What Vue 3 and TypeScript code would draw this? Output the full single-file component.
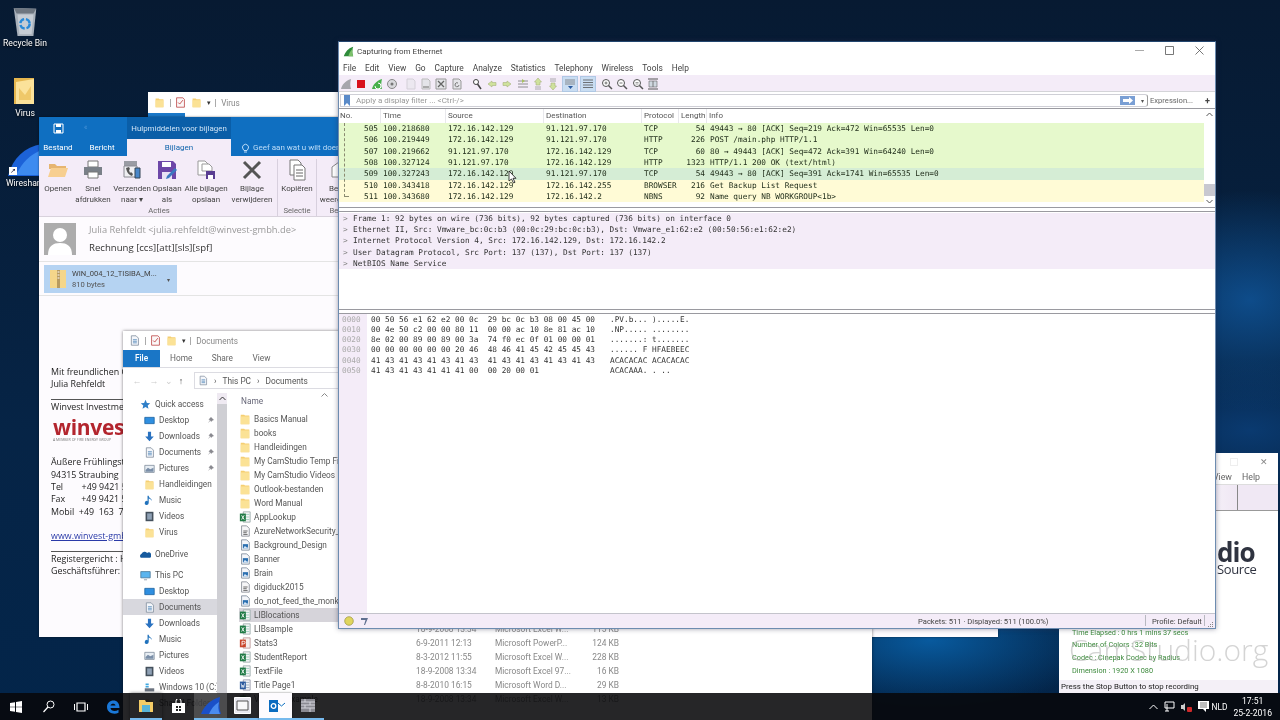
<script setup lang="ts">
interface Packet {
  no: number
  time: string
  src: string
  dst: string
  proto: string
  len: number
  info: string
  tone: string
}

const wsMenu = ['File', 'Edit', 'View', 'Go', 'Capture', 'Analyze', 'Statistics', 'Telephony', 'Wireless', 'Tools', 'Help']

const packets: Packet[] = [
  { no: 505, time: '100.218680', src: '172.16.142.129', dst: '91.121.97.170', proto: 'TCP', len: 54, info: '49443 → 80 [ACK] Seq=219 Ack=472 Win=65535 Len=0', tone: 'green' },
  { no: 506, time: '100.219449', src: '172.16.142.129', dst: '91.121.97.170', proto: 'HTTP', len: 226, info: 'POST /main.php HTTP/1.1', tone: 'green' },
  { no: 507, time: '100.219662', src: '91.121.97.170', dst: '172.16.142.129', proto: 'TCP', len: 60, info: '80 → 49443 [ACK] Seq=472 Ack=391 Win=64240 Len=0', tone: 'green' },
  { no: 508, time: '100.327124', src: '91.121.97.170', dst: '172.16.142.129', proto: 'HTTP', len: 1323, info: 'HTTP/1.1 200 OK  (text/html)', tone: 'green' },
  { no: 509, time: '100.327243', src: '172.16.142.129', dst: '91.121.97.170', proto: 'TCP', len: 54, info: '49443 → 80 [ACK] Seq=391 Ack=1741 Win=65535 Len=0', tone: 'hover' },
  { no: 510, time: '100.343418', src: '172.16.142.129', dst: '172.16.142.255', proto: 'BROWSER', len: 216, info: 'Get Backup List Request', tone: 'yellow' },
  { no: 511, time: '100.343680', src: '172.16.142.129', dst: '172.16.142.2', proto: 'NBNS', len: 92, info: 'Name query NB WORKGROUP<1b>', tone: 'yellow' },
]

const details = [
  'Frame 1: 92 bytes on wire (736 bits), 92 bytes captured (736 bits) on interface 0',
  'Ethernet II, Src: Vmware_bc:0c:b3 (00:0c:29:bc:0c:b3), Dst: Vmware_e1:62:e2 (00:50:56:e1:62:e2)',
  'Internet Protocol Version 4, Src: 172.16.142.129, Dst: 172.16.142.2',
  'User Datagram Protocol, Src Port: 137 (137), Dst Port: 137 (137)',
  'NetBIOS Name Service',
]

const hexRows = [
  ['0000', '00 50 56 e1 62 e2 00 0c  29 bc 0c b3 08 00 45 00', '.PV.b... ).....E.'],
  ['0010', '00 4e 50 c2 00 00 80 11  00 00 ac 10 8e 81 ac 10', '.NP..... ........'],
  ['0020', '8e 02 00 89 00 89 00 3a  74 f0 ec 0f 01 00 00 01', '.......: t.......'],
  ['0030', '00 00 00 00 00 00 20 46  48 46 41 45 42 45 45 43', '...... F HFAEBEEC'],
  ['0040', '41 43 41 43 41 43 41 43  41 43 41 43 41 43 41 43', 'ACACACAC ACACACAC'],
  ['0050', '41 43 41 43 41 41 41 00  00 20 00 01', 'ACACAAA. . ..'],
]

const ribbon = [
  { label: ['Openen'], icon: 'open', w: 30 },
  { label: ['Snel', 'afdrukken'], icon: 'print', w: 40 },
  { label: ['Verzenden', 'naar ▾'], icon: 'send', w: 38 },
  { label: ['Opslaan', 'als'], icon: 'save', w: 32 },
  { label: ['Alle bijlagen', 'opslaan'], icon: 'saveall', w: 46 },
  { label: ['Bijlage', 'verwijderen'], icon: 'del', w: 46 },
]

const nav = [
  { label: 'Quick access', icon: 'star', lvl: 0 },
  { label: 'Desktop', icon: 'desk', lvl: 1, pin: true },
  { label: 'Downloads', icon: 'down', lvl: 1, pin: true },
  { label: 'Documents', icon: 'doc', lvl: 1, pin: true },
  { label: 'Pictures', icon: 'pic', lvl: 1, pin: true },
  { label: 'Handleidingen', icon: 'folder', lvl: 1 },
  { label: 'Music', icon: 'music', lvl: 1 },
  { label: 'Videos', icon: 'video', lvl: 1 },
  { label: 'Virus', icon: 'folder', lvl: 1 },
  { label: 'OneDrive', icon: 'cloud', lvl: 0, gap: 6 },
  { label: 'This PC', icon: 'pc', lvl: 0, gap: 5 },
  { label: 'Desktop', icon: 'desk', lvl: 1 },
  { label: 'Documents', icon: 'doc', lvl: 1, sel: true },
  { label: 'Downloads', icon: 'down', lvl: 1 },
  { label: 'Music', icon: 'music', lvl: 1 },
  { label: 'Pictures', icon: 'pic', lvl: 1 },
  { label: 'Videos', icon: 'video', lvl: 1 },
  { label: 'Windows 10 (C:)', icon: 'drive', lvl: 1 },
  { label: 'Shared Folder', icon: 'folder', lvl: 1 },
]

const files = [
  { name: 'Basics Manual', icon: 'folder' },
  { name: 'books', icon: 'folder' },
  { name: 'Handleidingen', icon: 'folder' },
  { name: 'My CamStudio Temp Files', icon: 'folder' },
  { name: 'My CamStudio Videos', icon: 'folder' },
  { name: 'Outlook-bestanden', icon: 'folder' },
  { name: 'Word Manual', icon: 'folder' },
  { name: 'AppLookup', icon: 'xls' },
  { name: 'AzureNetworkSecurity_', icon: 'txt' },
  { name: 'Background_Design', icon: 'img' },
  { name: 'Banner', icon: 'img' },
  { name: 'Brain', icon: 'img' },
  { name: 'digiduck2015', icon: 'txt' },
  { name: 'do_not_feed_the_monkeys', icon: 'img' },
  { name: 'LIBlocations', icon: 'xls', sel: true },
  { name: 'LIBsample', icon: 'xls', date: '18-9-2008 13:34', type: 'Microsoft Excel W...', size: '115 KB' },
  { name: 'Stats3', icon: 'ppt', date: '6-9-2011 12:13', type: 'Microsoft PowerP...', size: '124 KB' },
  { name: 'StudentReport', icon: 'xls', date: '8-3-2012 11:55', type: 'Microsoft Excel W...', size: '228 KB' },
  { name: 'TextFile', icon: 'xls', date: '18-9-2008 13:34', type: 'Microsoft Excel 97...', size: '16 KB' },
  { name: 'Title Page1', icon: 'word', date: '8-8-2010 16:15', type: 'Microsoft Word D...', size: '29 KB' },
  { name: 'VLookupExample', icon: 'xls', date: '18-9-2008 13:34', type: 'Microsoft Excel W...', size: '13 KB' },
]

const address = [
  'Äußere Frühlingstraße 12',
  '94315 Straubing',
  'Tel        +49 9421 5',
  'Fax       +49 9421 5',
  'Mobil  +49  163  7',
]

const taskApps = ['explorer', 'store', 'shark', 'cam', 'outlook', 'brick']
const appOn = (a: string) => a !== 'store'
</script>

<template>
  <div class="desktop">
    <svg width="0" height="0" class="defs">
      <defs>
        <symbol id="i-folder" viewBox="0 0 14 14"><path d="M2 2h4l1 1h5v10H2z" fill="#f5cf72" /><path d="M2 4h10v9H2z" fill="#fbe296" /></symbol>
        <symbol id="i-doc" viewBox="0 0 14 14"><path d="M3 1h6l3 3v9H3z" fill="#f4f6fa" stroke="#7f8c9c" /><path d="M5 6h5M5 8h5M5 10h5" stroke="#4f86b8" /></symbol>
        <symbol id="i-txt" viewBox="0 0 14 14"><path d="M3 1h6l3 3v9H3z" fill="#f6f6f8" stroke="#8a8f98" /><path d="M5 7h5M5 9h4M5 11h5" stroke="#555" /></symbol>
        <symbol id="i-check" viewBox="0 0 14 14"><path d="M2 1h8l2 2v10H2z" fill="#fbf8f8" stroke="#b44" /><path d="M4 7l2 2 4-5" stroke="#b33" fill="none" /></symbol>
        <symbol id="i-xls" viewBox="0 0 14 14"><path d="M5 1h8v12H5z" fill="#f5f6f6" stroke="#9aa" /><path d="M8 4h4M8 7h4M8 10h4" stroke="#9cb" /><path d="M1 3h7v9H1z" fill="#1f7a45" /><path d="M3 5l3 5M6 5l-3 5" stroke="#fff" /></symbol>
        <symbol id="i-ppt" viewBox="0 0 14 14"><path d="M5 1h8v12H5z" fill="#f5f0ee" stroke="#b99" /><path d="M1 3h7v9H1z" fill="#c8452a" /><path d="M3.5 10V5h2a1.3 1.3 0 0 1 0 3h-2" stroke="#fff" fill="none" /></symbol>
        <symbol id="i-word" viewBox="0 0 14 14"><path d="M5 1h8v12H5z" fill="#f2f4f8" stroke="#99a" /><path d="M8 4h4M8 7h4M8 10h4" stroke="#9ab" /><path d="M1 3h7v9H1z" fill="#2b5a9e" /><path d="M2.5 5l1 5 1-3 1 3 1-5" stroke="#fff" fill="none" stroke-width=".8" /></symbol>
        <symbol id="i-img" viewBox="0 0 14 14"><path d="M3 1h6l3 3v9H3z" fill="#f4f6fa" stroke="#7f8c9c" /><path d="M4.500 6h6v5h-6z" fill="#2a6fb0" /><path d="M5 11l2-3 1.500 2 1-1 1 2z" fill="#d8e8f8" /></symbol>
        <symbol id="i-desk" viewBox="0 0 14 14"><path d="M1 3h12v8H1z" fill="#2f8fe0" stroke="#17609f" /></symbol>
        <symbol id="i-down" viewBox="0 0 14 14"><path d="M5 1h4v6h3.500L7 13 1.500 7H5z" fill="#2a72c0" /></symbol>
        <symbol id="i-pic" viewBox="0 0 14 14"><path d="M1 3h12v9H1z" fill="#e8eef4" stroke="#7f8c9c" /><path d="M2 9l3-3 3 2 4-2v5H2z" fill="#7a8ea8" /></symbol>
        <symbol id="i-music" viewBox="0 0 14 14"><path d="M6 1v9a2.500 2.500 0 1 1-1.500-2.200V1h1.500c0 3 4 3 4 6.500-1-2-2.500-2.500-4-3" fill="#2072bc" /></symbol>
        <symbol id="i-video" viewBox="0 0 14 14"><path d="M2 1h10v12H2z" fill="#44505c" /><path d="M4 3h6v8H4z" fill="#8ea0b4" /></symbol>
        <symbol id="i-star" viewBox="0 0 14 14"><path d="M7 1l1.800 4 4.200.4-3.200 2.800 1 4.300L7 10.200 3.200 12.500l1-4.300L1 5.400 5.200 5z" fill="#2f7fc8" /></symbol>
        <symbol id="i-cloud" viewBox="0 0 14 14"><path d="M1 11a3 3 0 0 1 1-5 4 4 0 0 1 7-1 3 3 0 0 1 4 6z" fill="#165a9e" /></symbol>
        <symbol id="i-pc" viewBox="0 0 14 14"><path d="M1 2h12v8H1z" fill="#5ab4ee" stroke="#4a7898" /><path d="M5 12h4v1H5z" fill="#7a8a9a" /></symbol>
        <symbol id="i-drive" viewBox="0 0 14 14"><path d="M1 8h12v4H1z" fill="#6c7480" /><path d="M2 2h4v2H2zM2 5h4v2H2z" fill="#40a8e0" /></symbol>
        <symbol id="i-shark" viewBox="0 0 14 14"><path d="M1 13C3 8 6 3 13 1c-1.500 4-1.500 8 0 12z" fill="#2e8b3a" /><path d="M7 13c.5-3 2-6 5.500-10-1 4-1 7 .5 10z" fill="#7cc06a" /></symbol>
      </defs>
    </svg>

    <!-- desktop icons -->
    <div class="desk-icon recycle">
      <svg width="30" height="30" viewBox="0 0 30 32"><path d="M3 2l24 1-3 29H7z" fill="#a8b0ba" /><path d="M3 2l24 1-3 5H6z" fill="#6e7680" /><path d="M7 9h17l-2 21H9z" fill="#c6ccd4" /><circle cx="15" cy="19" r="5" fill="none" stroke="#2a8ad8" stroke-width="2.500" stroke-dasharray="6 2" /></svg>
      <span>Recycle Bin</span>
    </div>
    <div class="desk-icon virus">
      <svg width="24" height="30" viewBox="0 0 24 30"><path d="M1 2h20v26H1z" fill="#e5b64e" /><path d="M3 6l18-3v25H3z" fill="#fbe29a" /><path d="M6 12l6 7 6-9v14H6z" fill="#efc869" /></svg>
      <span>Virus</span>
    </div>
    <div class="desk-icon shark-ic">
      <svg width="34" height="32" viewBox="0 0 34 32"><path d="M0 32C5 14 16 3 34 0v32z" fill="#1c62d8" /><path d="M8 31C14 19 22 10 34 6v25z" fill="#3d8bf0" /></svg>
      <i class="shortcut">↗</i>
      <span>Wireshark</span>
    </div>

    <!-- CamStudio behind everything -->
    <section class="win cam">
      <div class="cam-title"><i class="cam-max"></i><span class="cam-x">✕</span></div>
      <div class="cam-menu"><span>Region</span><span>Effects</span><span>View</span><span>Help</span></div>
      <div class="cam-tools"><div class="cam-sep"></div></div>
      <div class="cam-body">
        <div class="cam-logo"><b>dio</b><span>Source</span></div>
        <div class="cam-stats">
          <p>Time Elapsed : 0 hrs 1 mins 37 secs</p>
          <p>Number of Colors : 32 Bits</p>
          <p>Codec : Cinepak Codec by Radius</p>
          <p>Dimension : 1920 X 1080</p>
        </div>
        <div class="cam-mark">CamStudio.org</div>
      </div>
      <div class="cam-status">Press the Stop Button to stop recording</div>
    </section>

    <!-- Virus folder -->
    <section class="win virusfolder">
      <div class="qat">
        <svg width="11" height="11"><use href="#i-folder" /></svg>
        <i class="qsep"></i>
        <svg width="11" height="11"><use href="#i-check" /></svg>
        <svg width="11" height="11"><use href="#i-folder" /></svg>
        <small>▾</small>
        <i class="qsep"></i>
        <span>Virus</span>
      </div>
      <div class="vf-tab"></div>
    </section>

    <!-- Outlook attachment window -->
    <section class="win outlook">
      <div class="ol-top">
        <div class="ol-save">
          <svg width="11" height="11" viewBox="0 0 11 11"><path d="M1 1h9v9H1z" fill="none" stroke="#fff" /><path d="M3 1h5v3H3zM3 7h5v3H3z" fill="#fff" /></svg>
          <em>«</em>
        </div>
        <div class="ol-ctx">Hulpmiddelen voor bijlagen</div>
      </div>
      <div class="ol-tabs">
        <span class="ol-tab first">Bestand</span>
        <span class="ol-tab second">Bericht</span>
        <span class="ol-tab cur">Bijlagen</span>
        <span class="ol-tell">
          <svg width="9" height="10" viewBox="0 0 9 10"><path d="M2 6a3 3 0 1 1 5 0L6 7.500H3zM3 9h3" fill="none" stroke="#bcdcf8" /></svg>
          Geef aan wat u wilt doen
        </span>
      </div>
      <div class="ol-ribbon">
        <div class="rb-group">
          <div class="rb-btns">
            <div v-for="b in ribbon" :key="b.icon" class="rb-btn" :style="{ width: b.w + 'px' }">
              <svg width="22" height="22" viewBox="0 0 22 22">
                <template v-if="b.icon === 'open'"><path d="M2 5h6l2 2h9v3H2z" fill="#e6b570" /><path d="M1 18l3-9h17l-3 9z" fill="#f7cf90" /></template>
                <template v-else-if="b.icon === 'print'"><path d="M6 2h10v6H6z" fill="#fff" stroke="#777" /><path d="M2 8h18v8H2z" fill="#7a8088" /><path d="M6 13h10v6H6z" fill="#fff" stroke="#777" /></template>
                <template v-else-if="b.icon === 'send'"><path d="M3 2h13v5H3z" fill="#9a9ca4" /><path d="M3 7h13v11H3z" fill="#efeff2" stroke="#8a8a92" /><path d="M5 9c1 5 3 7 6 8l1-2-2-2-1 1-1-3 1-1-1-2z" fill="#555" /><path d="M14 9h5v10h-5z" fill="#4a86c8" stroke="#345" /></template>
                <template v-else-if="b.icon === 'save'"><path d="M2 2h15l3 3v15H2z" fill="#6d47a8" /><path d="M6 3h9v5H6z" fill="#fff" /><path d="M6 13h10v7H6z" fill="#e8e2f4" /><path d="M11 17l8-8 2 2-8 8-3 1z" fill="#3a78c0" /></template>
                <template v-else-if="b.icon === 'saveall'"><path d="M3 2h7l3 3v11H3z" fill="#fff" stroke="#999" /><path d="M7 5h7l3 3v4H7z" fill="#fff" stroke="#999" /><path d="M11 12h9v8h-9z" fill="#5a3e92" /><path d="M13 16h5v4h-5z" fill="#fff" /></template>
                <template v-else><path d="M3 3l16 16M19 3L3 19" stroke="#555" stroke-width="3" /></template>
              </svg>
              <span v-for="l in b.label" :key="l">{{ l }}</span>
            </div>
          </div>
          <div class="rb-name">Acties</div>
        </div>
        <div class="rb-group sep">
          <div class="rb-btns">
            <div class="rb-btn copy">
              <svg width="22" height="22" viewBox="0 0 22 22"><path d="M4 1h8l3 3v12H4z" fill="#fff" stroke="#777" /><path d="M8 6h8l3 3v12H8z" fill="#fff" stroke="#777" /><path d="M10 11h7M10 14h7M10 17h7" stroke="#666" /></svg>
              <span>Kopiëren</span>
            </div>
          </div>
          <div class="rb-name">Selectie</div>
        </div>
        <div class="rb-group sep">
          <div class="rb-btns">
            <div class="rb-btn view">
              <svg width="22" height="22" viewBox="0 0 22 22"><path d="M4 8l7-5 7 5v10H4z" fill="#fff" stroke="#888" /></svg>
              <span>Beeld</span><span>weergeven</span>
            </div>
          </div>
          <div class="rb-name">Beeld</div>
        </div>
      </div>
      <div class="ol-head">
        <svg width="32" height="32" viewBox="0 0 32 32"><path d="M0 0h32v32H0z" fill="#acacac" /><circle cx="16" cy="12" r="7" fill="#fff" /><path d="M4 32c0-9 5-12 12-12s12 3 12 12z" fill="#fff" /></svg>
        <div>
          <div class="ol-from">Julia Rehfeldt &lt;julia.rehfeldt@winvest-gmbh.de&gt;</div>
          <div class="ol-subj">Rechnung [ccs][att][sls][spf]</div>
        </div>
      </div>
      <div class="ol-attach">
        <div class="chip">
          <svg width="16" height="20" viewBox="0 0 16 20"><path d="M0 1h16v18H0z" fill="#f4d68a" /><path d="M7 1h3v18H7z" fill="#b89b60" /><path d="M7.500 3h2M7.500 6h2M7.500 9h2" stroke="#fff" /></svg>
          <div class="chip-txt"><span>WIN_004_12_TISIBA_M...</span><span class="chip-size">810 bytes</span></div>
          <small>▾</small>
        </div>
      </div>
      <div class="ol-body">
        <p>Mit freundlichen Grüßen</p>
        <p>Julia Rehfeldt</p>
        <div class="sig-rule"></div>
        <p>Winvest Investment GmbH</p>
        <div class="logo">winvest<small>A MEMBER OF FIRE ENERGY GROUP</small></div>
        <div class="sig-addr"><p v-for="a in address" :key="a" class="pre">{{ a }}</p></div>
        <a class="sig-link">www.winvest-gmbh.de</a>
        <div class="sig-rule"></div>
        <p>Registergericht : HRB</p>
        <p>Geschäftsführer: C</p>
      </div>
    </section>

    <!-- Explorer -->
    <section class="win explorer">
      <div class="qat ex-qat">
        <svg width="11" height="11"><use href="#i-doc" /></svg>
        <i class="qsep"></i>
        <svg width="11" height="11"><use href="#i-check" /></svg>
        <svg width="11" height="11"><use href="#i-folder" /></svg>
        <small>▾</small>
        <i class="qsep"></i>
        <span>Documents</span>
      </div>
      <div class="ex-tabs">
        <span class="ex-file">File</span><span>Home</span><span>Share</span><span>View</span>
      </div>
      <div class="ex-addr">
        <span class="ex-arrow dim">←</span><span class="ex-arrow dim">→</span><span class="ex-arrow dim small">⌄</span><span class="ex-arrow">↑</span>
        <div class="crumbs">
          <svg width="10" height="11"><use href="#i-doc" /></svg>
          <span>›</span><span>This PC</span><span>›</span><span>Documents</span>
        </div>
      </div>
      <div class="ex-main">
        <nav class="ex-nav">
          <div v-for="(n, i) in nav" :key="i" class="nav-row" :class="['lvl' + n.lvl, { sel: n.sel }]" :style="n.gap ? { marginTop: n.gap + 'px' } : undefined">
            <svg width="11" height="11"><use :href="'#i-' + n.icon" /></svg>
            <span>{{ n.label }}</span>
            <svg v-if="n.pin" class="pin" width="7" height="7" viewBox="0 0 7 7"><path d="M4 0l3 3-1.500.5L4 5 3.500 3.500 1 6l2-3-1.500-.5z" fill="#8a8a90" /></svg>
          </div>
        </nav>
        <div class="ex-scroll">
          <svg class="chev" width="7" height="5" viewBox="0 0 7 5"><path d="M.5 4l3-3 3 3" fill="none" stroke="#333" /></svg>
          <div class="ex-thumb"></div>
        </div>
        <div class="ex-files">
          <div class="ex-head"><span>Name</span><svg class="sort" width="7" height="4" viewBox="0 0 7 4"><path d="M.5 3.500l3-3 3 3" fill="none" stroke="#888" /></svg></div>
          <div v-for="f in files" :key="f.name" class="file-row" :class="{ sel: f.sel }">
            <span class="file-name"><svg width="12" height="12"><use :href="'#i-' + f.icon" /></svg>{{ f.name }}</span>
            <span class="meta">{{ f.date }}</span>
            <span class="meta">{{ f.type }}</span>
            <span class="meta size">{{ f.size }}</span>
          </div>
        </div>
      </div>
    </section>

    <!-- Wireshark -->
    <section class="win ws">
      <header class="ws-title">
        <svg width="11" height="11"><use href="#i-shark" /></svg>
        <span>Capturing from Ethernet</span>
        <div class="ws-controls">
          <svg width="9" height="9" viewBox="0 0 9 9"><path d="M0 4.500h9" stroke="#aaa" /></svg>
          <svg width="9" height="9" viewBox="0 0 9 9"><path d="M.5.500h8v8h-8z" fill="none" stroke="#555" stroke-width=".8" /></svg>
          <svg width="9" height="9" viewBox="0 0 9 9"><path d="M.5.500l8 8M8.500.500l-8 8" stroke="#555" stroke-width=".8" /></svg>
        </div>
      </header>
      <div class="ws-menu"><span v-for="m in wsMenu" :key="m">{{ m }}</span></div>
      <div class="ws-tools">
        <svg viewBox="0 0 12 12"><path d="M1 11C2 7 5 3 11 1c-1 4-1 7 0 10z" fill="#a6a6ac" /></svg>
        <svg viewBox="0 0 12 12"><path d="M2 2h8v8H2z" fill="#d8101c" /></svg>
        <svg viewBox="0 0 12 12"><path d="M1 11C2 7 5 3 11 1c-1 4-1 7 0 10z" fill="#48b04c" /><path d="M4 8a3 3 0 1 0 3-3" stroke="#fff" fill="none" /></svg>
        <svg viewBox="0 0 12 12"><circle cx="6" cy="6" r="4.500" fill="#d8d8dc" stroke="#888" /><circle cx="6" cy="6" r="1.500" fill="#777" /></svg>
        <i class="t-gap"></i>
        <svg viewBox="0 0 12 12"><path d="M2 1h6l2 2v8H2z" fill="#ece8f0" stroke="#d4d0d8" /></svg>
        <svg viewBox="0 0 12 12"><path d="M2 1h6l2 2v8H2z" fill="#e4e4e8" stroke="#bbb" /><path d="M3 8h6v2H3z" fill="#aaa" /></svg>
        <svg viewBox="0 0 12 12"><path d="M1 1h10v10H1z" fill="#e4e4e8" stroke="#999" /><path d="M3 3l6 6M9 3l-6 6" stroke="#666" stroke-width="1.300" /></svg>
        <svg viewBox="0 0 12 12"><path d="M2 1h6l2 2v8H2z" fill="#e4e4e8" stroke="#999" /><path d="M8 7a2 2 0 1 1-1-2" stroke="#777" fill="none" /></svg>
        <i class="t-gap small"></i>
        <svg viewBox="0 0 12 12"><circle cx="5" cy="4" r="2.500" fill="#fff" stroke="#444" /><path d="M6.500 6l3.500 5" stroke="#444" stroke-width="1.500" /></svg>
        <svg viewBox="0 0 12 12"><path d="M6 3L2 6l4 3V7.500h4v-3H6z" fill="#cfe29c" stroke="#a8b47c" stroke-width=".6" /></svg>
        <svg viewBox="0 0 12 12"><path d="M6 3l4 3-4 3V7.500H2v-3h4z" fill="#cfe29c" stroke="#a8b47c" stroke-width=".6" /></svg>
        <svg viewBox="0 0 12 12"><path d="M1 3h10M1 6h10M1 9h10" stroke="#777" stroke-width=".8" /><path d="M5 1l3 2-3 2z" fill="#a8c060" /></svg>
        <svg viewBox="0 0 12 12"><path d="M6 0l3.500 4H8v3H4V4H2.500z" fill="#cfe29c" stroke="#a8b47c" stroke-width=".6" /><path d="M3 9h6M3 11h6" stroke="#999" stroke-width=".8" /></svg>
        <svg viewBox="0 0 12 12"><path d="M6 12L2.500 8H4V5h4v3h1.500z" fill="#cfe29c" stroke="#a8b47c" stroke-width=".6" /><path d="M3 1h6M3 3h6" stroke="#999" stroke-width=".8" /></svg>
        <span class="t-on"><svg viewBox="0 0 12 12"><path d="M1 2h10M1 4h10M1 6h10" stroke="#777" stroke-width=".8" /><path d="M4 8h5l-2.500 3z" fill="#2a5aa0" /></svg></span>
        <span class="t-on last"><svg viewBox="0 0 12 12"><path d="M1 2h10M1 4.500h10M1 7h10M1 9.500h10" stroke="#555" stroke-width=".8" /></svg></span>
        <svg viewBox="0 0 12 12"><circle cx="5" cy="5" r="3.500" fill="#fff" stroke="#555" /><path d="M7.500 7.500L11 11" stroke="#555" stroke-width="1.500" /><path d="M3.500 5h3M5 3.500v3" stroke="#555" stroke-width=".8" /></svg>
        <svg viewBox="0 0 12 12"><circle cx="5" cy="5" r="3.500" fill="#fff" stroke="#555" /><path d="M7.500 7.500L11 11" stroke="#555" stroke-width="1.500" /><path d="M3.500 5h3" stroke="#555" stroke-width=".8" /></svg>
        <svg viewBox="0 0 12 12"><circle cx="5" cy="5" r="3.500" fill="#fff" stroke="#555" /><path d="M7.500 7.500L11 11" stroke="#555" stroke-width="1.500" /><path d="M3.500 4.500h3M3.500 6h3" stroke="#777" stroke-width=".7" /></svg>
        <svg viewBox="0 0 12 12"><path d="M1 1h10M1 11h10" stroke="#555" /><path d="M2 3h8v6H2z" fill="#cfd8e0" stroke="#666" stroke-width=".6" /><path d="M6 3v6" stroke="#666" stroke-width=".8" /></svg>
      </div>
      <div class="ws-filter">
        <div class="filter-box">
          <svg width="8" height="11" viewBox="0 0 8 11"><path d="M1 0h6v11L4 8l-3 3z" fill="#5a8ac8" /></svg>
          <span class="filter-ph">Apply a display filter ... &lt;Ctrl-/&gt;</span>
          <span class="filter-go"><svg width="10" height="7" viewBox="0 0 10 7"><path d="M0 2h6V0l4 3.500L6 7V5H0z" fill="#fff" /></svg></span>
          <small>▾</small>
        </div>
        <span class="expr">Expression...</span>
        <span class="plus">+</span>
      </div>

      <div class="pk">
        <div class="pk-main">
          <div class="pk-head pk-grid">
            <span>No.</span><span>Time</span><span>Source</span><span>Destination</span><span>Protocol</span><span>Length</span><span>Info</span>
          </div>
          <div class="pk-rows">
            <div v-for="p in packets" :key="p.no" class="pk-row pk-grid" :class="p.tone">
              <span class="r">{{ p.no }}</span><span>{{ p.time }}</span><span>{{ p.src }}</span><span>{{ p.dst }}</span><span>{{ p.proto }}</span><span class="r">{{ p.len }}</span><span>{{ p.info }}</span>
            </div>
            <i class="related"></i>
          </div>
        </div>
        <div class="vbar">
          <svg class="up" width="7" height="5" viewBox="0 0 7 5"><path d="M.5 4l3-3 3 3" fill="none" stroke="#555" /></svg>
          <i class="vthumb"></i>
          <svg class="dn" width="7" height="5" viewBox="0 0 7 5"><path d="M.5 1l3 3 3-3" fill="none" stroke="#555" /></svg>
        </div>
      </div>

      <div class="split"></div>
      <div class="det">
        <div v-for="d in details" :key="d" class="det-row"><span class="caret">&gt;</span>{{ d }}</div>
      </div>
      <div class="split"></div>
      <div class="hex">
        <div class="hex-off"><div v-for="h in hexRows" :key="h[0]">{{ h[0] }}</div></div>
        <div class="hex-data"><div v-for="h in hexRows" :key="h[0]">{{ h[1] }}</div></div>
        <div class="hex-asc"><div v-for="h in hexRows" :key="h[0]">{{ h[2] }}</div></div>
      </div>
      <footer class="ws-status">
        <svg width="10" height="10" viewBox="0 0 10 10"><circle cx="5" cy="5" r="4.300" fill="#e0d55e" stroke="#9a9440" stroke-width=".7" /></svg>
        <svg class="st-edit" width="9" height="9" viewBox="0 0 9 9"><path d="M1 1h7L5 8H4l1.500-5H1z" fill="#607090" /></svg>
        <span class="st-count">Packets: 511 · Displayed: 511 (100.0%)</span>
        <i class="st-sep one"></i>
        <span class="st-prof">Profile: Default</span>
        <i class="st-sep two"></i>
        <svg class="grip" width="7" height="7" viewBox="0 0 7 7"><path d="M5 1h1v1H5zM3 3h1v1H3zM5 3h1v1H5zM1 5h1v1H1zM3 5h1v1H3zM5 5h1v1H5z" fill="#888" /></svg>
      </footer>
    </section>

    <svg class="cursor" width="10" height="14" viewBox="0 0 10 14"><path d="M1 1v10l2.500-2 2 4 1.500-.7-2-4H8z" fill="#fff" stroke="#111" stroke-width=".8" /></svg>

    <!-- Taskbar -->
    <footer class="taskbar">
      <div class="tb-fixed">
        <svg width="12" height="12" viewBox="0 0 12 12"><path d="M0 2l5-.7V5.700H0zM6 1.100L12 0v5.700H6zM0 6.300h5v4.400L0 10zM6 6.300h6V12l-6-.9z" fill="#fff" /></svg>
      </div>
      <div class="tb-fixed">
        <svg width="12" height="13" viewBox="0 0 12 13"><circle cx="7.500" cy="4.500" r="3.500" fill="none" stroke="#fff" /><path d="M5 7l-4.500 5" stroke="#fff" stroke-width="1.200" /></svg>
      </div>
      <div class="tb-fixed">
        <svg width="14" height="10" viewBox="0 0 14 10"><path d="M3 1h8v8H3z" fill="none" stroke="#fff" stroke-width="1.200" /><path d="M.5 2v6M13.500 2v6" stroke="#fff" /></svg>
      </div>
      <div class="tb-fixed">
        <svg width="14" height="14" viewBox="0 0 14 14"><path d="M1 7C1 3 4 .5 7.500.5 11 .5 13.500 3 13.500 8H4.500c.3 3 4.500 4 8 1.800v2.900C8 15 1 13 1 7zM4.500 5.600h5C9.300 3 5 3 4.500 5.600z" fill="#1a78d8" /></svg>
      </div>
      <div v-for="a in taskApps" :key="a" class="tb-app" :class="[{ on: appOn(a) }, a]">
        <svg v-if="a === 'explorer'" width="16" height="14" viewBox="0 0 16 14"><path d="M1 1h6l1 2h7v10H1z" fill="#f4cc66" /><path d="M4 6h8v7H4z" fill="#58b4d8" /></svg>
        <svg v-else-if="a === 'store'" width="15" height="15" viewBox="0 0 15 15"><path d="M1 4h13v10H1z" fill="#fff" /><path d="M5 4V2a2 2 0 0 1 5 0v2" fill="none" stroke="#fff" /><path d="M5 7h2v2H5zM8 7h2v2H8zM5 10h2v2H5zM8 10h2v2H8z" fill="#222" /></svg>
        <svg v-else-if="a === 'shark'" width="20" height="17" viewBox="0 0 20 17"><path d="M0 17C3 9 10 2 19 0c-1 6-1 11 1 17z" fill="#1a50c8" /><path d="M8 17c2-5 5-9 10-12-1 4-1 8 1 12z" fill="#4a8cf0" /></svg>
        <svg v-else-if="a === 'cam'" width="17" height="17" viewBox="0 0 17 17"><path d="M.5.500h16v16H.5z" fill="#e8e8f0" stroke="#fff" /><path d="M3 4h11v9H3z" fill="#f8f8fa" stroke="#555" /></svg>
        <svg v-else-if="a === 'outlook'" width="16" height="14" viewBox="0 0 16 14"><path d="M0 1h9v12H0z" fill="#0b6cc0" /><circle cx="4.500" cy="7" r="2.300" fill="none" stroke="#fff" stroke-width="1.300" /><path d="M9 3h7v8H9z" fill="#fff" /><path d="M9 4l3.500 3L16 4" fill="none" stroke="#0b6cc0" /></svg>
        <svg v-else width="14" height="13" viewBox="0 0 14 13"><path d="M0 0h14v13H0z" fill="#8a8a92" /><path d="M0 3h14M0 6h14M0 9h14M4 0v3M9 3v3M4 6v3M9 9v4" stroke="#d4d4dc" /></svg>
      </div>
      <div class="tray">
        <svg width="9" height="6" viewBox="0 0 9 6"><path d="M.5 5l4-4 4 4" fill="none" stroke="#fff" /></svg>
        <svg width="11" height="11" viewBox="0 0 11 11"><path d="M1 1h9v6H1z" fill="none" stroke="#fff" /><path d="M3 3v7M1 10h4" stroke="#fff" /></svg>
        <svg width="11" height="10" viewBox="0 0 11 10"><path d="M0 3h2l2-2v8L2 7H0z" fill="#ccc" /><rect x="6" y="5" width="5" height="5" rx="1" fill="#d02a2a" /></svg>
        <svg width="11" height="11" viewBox="0 0 11 11"><path d="M0 0h11v8H8v3L5 8H0z" fill="#fff" /><path d="M2 2h7M2 4h7M2 6h7" stroke="#222" stroke-width=".6" /></svg>
        <span class="tray-lang">NLD</span>
        <div class="clock"><span>17:51</span><span>25-2-2016</span></div>
      </div>
    </footer>
  </div>
</template>

<style>
html, body { margin: 0; background: #061a33; }
</style>

<style scoped>
.desktop {
  position: relative;
  width: 1280px;
  height: 720px;
  overflow: hidden;
  font-family: Roboto, "Liberation Sans", sans-serif;
  font-size: 8.6px;
  color: #333;
  filter: blur(0.3px);
  background:
    radial-gradient(150px 110px at 1250px 300px, #0e4c8a 0%, rgba(14, 76, 138, 0) 100%),
    radial-gradient(140px 70px at 1250px 430px, #0a3a70 0%, rgba(10, 58, 112, 0) 100%),
    radial-gradient(170px 70px at 930px 640px, #085a9e 0%, rgba(8, 90, 158, 0) 100%),
    linear-gradient(180deg, #071a32 0%, #062446 60%, #03254a 100%);
}
.defs { position: absolute; }
p { margin: 0; }
svg { display: block; flex: none; }

.desk-icon {
  position: absolute;
  width: 50px;
  display: flex;
  flex-direction: column;
  align-items: center;
  color: #fff;
  font-size: 8.6px;
  text-shadow: 0 1px 2px #000;
}
.desk-icon span { white-space: nowrap; margin-top: 2px; }
.recycle { left: 0; top: 6px; }
.virus { left: 0; top: 76px; }
.shark-ic { left: 0; top: 144px; }
.shortcut {
  position: absolute;
  left: 9px;
  top: 23px;
  width: 8px;
  height: 8px;
  background: #fff;
  color: #113;
  font: normal 7px/8px "Liberation Sans", sans-serif;
  text-align: center;
  text-shadow: none;
}

.win { position: absolute; background: #fff; box-sizing: border-box; overflow: hidden; }

/* CamStudio */
.cam { left: 1059px; top: 453px; width: 219px; height: 240px; display: flex; flex-direction: column; }
.cam-title { height: 18px; display: flex; justify-content: flex-end; align-items: center; gap: 22px; padding-right: 10px; color: #888; font-size: 9px; }
.cam-max { width: 6px; height: 6px; border: 1px solid #eee; }
.cam-menu { height: 13px; display: flex; justify-content: flex-end; gap: 10px; padding-right: 18px; color: #666; line-height: 13px; font-size: 8.8px; border-bottom: 1px solid #ddd; }
.cam-tools { height: 25px; background: linear-gradient(90deg, #fff 120px, #f0e8f4 175px); border-bottom: 1px solid #999; display: flex; justify-content: flex-end; padding-right: 40px; }
.cam-sep { width: 1px; background: #888; }
.cam-body { position: relative; flex: 1; overflow: hidden; }
.cam-logo { position: absolute; left: 158px; top: 30px; display: flex; flex-direction: column; color: #2f3340; line-height: 1; font-family: "Open Sans", sans-serif; }
.cam-logo b { font-size: 26px; letter-spacing: -1px; line-height: 22px; }
.cam-logo span { font-size: 13px; letter-spacing: -.4px; line-height: 13px; }
.cam-stats { position: absolute; left: 13px; top: 115.5px; color: #3d8a3d; font-size: 7.3px; line-height: 12.7px; white-space: nowrap; }
.cam-mark { position: absolute; left: 10px; top: 121px; font-size: 30px; line-height: 36px; font-weight: 300; color: rgba(170, 170, 170, .5); white-space: nowrap; font-family: "Open Sans", sans-serif; }
.cam-status { height: 13px; background: #f4f0f7; line-height: 13px; font-size: 7.9px; padding-left: 2px; color: #222; }

/* virus folder */
.virusfolder { left: 148px; top: 92px; width: 400px; height: 30px; }
.qat { height: 21px; padding-left: 6px; display: flex; align-items: center; gap: 4.7px; font-size: 8.2px; color: #888; }
.qat small { font-size: 7px; color: #333; }
.qsep { width: 1px; height: 8px; background: #aaa; }
.vf-tab { width: 37px; height: 9px; background: #1a78c8; }

/* Outlook */
.outlook { left: 39px; top: 117px; width: 959px; height: 520px; display: flex; flex-direction: column; box-shadow: 0 0 2px rgba(0, 0, 0, .5); background: #fdfbfe; }
.ol-top { height: 22px; background: #0f6fc1; display: flex; color: #fff; }
.ol-save { width: 88px; display: flex; align-items: center; gap: 20px; padding-left: 14px; box-sizing: border-box; }
.ol-save em { font-size: 7px; color: #4c95d8; font-style: normal; }
.ol-ctx { width: 104px; background: #0a5ea8; text-align: center; line-height: 24px; font-size: 7.9px; color: #cfe3f5; }
.ol-tabs { height: 17px; background: #0f6fc1; display: flex; align-items: center; color: #fff; font-size: 8px; }
.ol-tab.first { width: 38px; text-align: center; }
.ol-tab.second { width: 50px; text-align: center; }
.ol-tab.cur { width: 104px; height: 17px; line-height: 17px; background: #f4ecf8; color: #0f64ac; text-align: center; }
.ol-tell { margin-left: 10px; display: flex; align-items: center; gap: 3px; color: #bcdcf8; }
.ol-ribbon { height: 61px; background: #f4ecf8; border-bottom: 1px solid #d8d2dc; display: flex; box-sizing: border-box; padding: 3px 0 0 4px; }
.rb-group { display: flex; flex-direction: column; align-items: center; padding-right: 2px; }
.rb-group.sep { border-left: 1px solid #d8d0de; padding-left: 2px; }
.rb-btns { display: flex; flex: 1; }
.rb-btn { display: flex; flex-direction: column; align-items: center; line-height: 11px; font-size: 8px; color: #444; white-space: nowrap; }
.rb-btn svg { margin-bottom: 2px; }
.rb-btn.copy { width: 34px; }
.rb-btn.view { width: 40px; }
.rb-name { font-size: 7.7px; color: #666; line-height: 11px; height: 11px; }
.ol-head { height: 45px; display: flex; gap: 13px; padding: 6px 0 0 5px; box-sizing: border-box; border-bottom: 1px solid #e4e4e4; }
.ol-from { color: #999; font-family: "Open Sans", sans-serif; font-size: 9.3px; line-height: 14px; }
.ol-subj { color: #333; font-family: "Open Sans", sans-serif; font-size: 9.6px; line-height: 18px; margin-top: 2px; }
.ol-attach { height: 34px; padding: 3px 0 0 5px; box-sizing: border-box; border-bottom: 1px solid #e4e4e4; }
.chip { width: 133px; height: 28px; background: #b5d3f2; display: flex; align-items: center; padding-left: 6px; box-sizing: border-box; gap: 6px; }
.chip small { font-size: 6px; color: #555; margin-left: 4px; }
.chip-txt { display: flex; flex-direction: column; line-height: 11px; font-size: 7.6px; color: #444; white-space: nowrap; }
.chip-size { color: #555; }
.ol-body { padding: 69.5px 0 0 12px; font-family: "Open Sans", sans-serif; font-size: 8.9px; color: #222; line-height: 12.3px; white-space: nowrap; }
.sig-rule { width: 300px; border-top: 1px solid #555; margin: 9px 0 1px; }
.logo { color: #b3252e; font: 700 21px/22px "Open Sans", sans-serif; letter-spacing: -.3px; margin: 3px 0 0 2px; height: 32px; }
.logo small { display: block; font-size: 3.5px; line-height: 4px; color: #777; font-weight: 400; letter-spacing: 0; }
.sig-addr { margin: 8px 0 12px; }
.pre { white-space: pre; }
.sig-link { display: block; color: #2a3aa8; text-decoration: underline; }

/* Explorer */
.explorer { left: 123px; top: 331px; width: 749px; height: 389px; display: flex; flex-direction: column; box-shadow: 0 0 3px rgba(0, 0, 0, .5); }
.ex-qat { height: 19px; }
.ex-tabs { height: 17px; display: flex; gap: 19.5px; border-bottom: 1px solid #dcdce2; color: #666; line-height: 16px; font-size: 8.3px; }
.ex-tabs .ex-file { width: 37px; margin-right: -9.5px; background: #1a76c6; color: #fff; text-align: center; font-weight: 500; }
.ex-addr { height: 25px; display: flex; align-items: center; padding-left: 8px; gap: 5px; font-size: 9px; }
.ex-arrow { width: 12px; text-align: center; color: #555; }
.ex-arrow.dim { color: #ccc; }
.ex-arrow.small { width: 5px; }
.crumbs { flex: 1; height: 15px; margin-left: 2px; border: 1px solid #dcdce2; display: flex; align-items: center; gap: 6px; padding-left: 3px; color: #555; font-size: 8.3px; }
.ex-main { flex: 1; display: flex; min-height: 0; overflow: hidden; }
.ex-nav { width: 94px; padding-top: 3px; flex: none; }
.nav-row { height: 16px; display: flex; align-items: center; gap: 4px; white-space: nowrap; color: #555; position: relative; font-size: 8.25px; }
.nav-row.lvl0 { padding-left: 17px; }
.nav-row.lvl1 { padding-left: 21px; }
.nav-row.sel { background: #d8d8de; }
.pin { position: absolute; left: 84px; top: 5px; }
.ex-scroll { width: 10px; flex: none; background: #efeaf2; position: relative; }
.chev { position: absolute; left: 1.5px; top: 3px; }
.ex-thumb { position: absolute; left: 0; top: 11px; width: 10px; height: 290px; background: #cfcfd4; }
.ex-files { flex: 1; padding-left: 12px; min-width: 0; }
.ex-head { height: 19px; line-height: 16px; position: relative; color: #667; font-size: 8.3px; padding-left: 2px; }
.sort { position: absolute; left: 82px; top: 0; }
.file-row { height: 14px; display: grid; grid-template-columns: 177px 79px 85px 39px; align-items: center; white-space: nowrap; color: #555; }
.file-row.sel { background: #d6d4da; }
.file-name { display: flex; align-items: center; gap: 3px; font-size: 8.25px; overflow: hidden; }
.meta { color: #888; font-size: 8.4px; }
.meta.size { text-align: right; }

/* Wireshark */
.ws {
  left: 338px; top: 41px; width: 878px; height: 588px;
  display: flex; flex-direction: column;
  border: 1px solid #6d8cb0; border-top-color: #23466f;
  box-shadow: 0 0 5px rgba(40, 40, 70, .45);
  font-size: 8px;
}
.ws-title { height: 19px; display: flex; align-items: center; padding-left: 4px; gap: 3px; color: #444; }
.ws-controls { margin-left: auto; display: flex; gap: 21px; padding: 0 11px 2px 0; }
.ws-menu { height: 14px; display: flex; gap: 8.9px; padding-left: 4px; color: #444; line-height: 14px; font-size: 8.4px; }
.ws-tools { height: 17px; background: #f4ecf8; display: flex; align-items: center; padding: 1px 0 0 1px; gap: 3.3px; border-bottom: 1px solid #d4d4d8; box-sizing: border-box; }
.ws-tools svg { width: 12px; height: 12px; }
.t-gap { width: .4px; }
.t-gap.small { width: 1.4px; }
.t-on { display: block; background: #c9ddf2; padding: 1px 1px; border: 1px solid #b0c8e4; margin: 0 -.7px; }
.t-on.last { margin-right: 2px; }
.ws-filter { height: 17px; display: flex; align-items: center; padding: 1px 2px 0 1px; gap: 4px; border-bottom: 1px solid #9a9aa0; box-sizing: border-box; }
.filter-box { width: 808px; flex: none; height: 13px; display: flex; align-items: center; padding-left: 2px; gap: 5px; border: 1px solid #cfcfd6; border-right-color: #999; border-radius: 0 3px 3px 0; box-sizing: border-box; }
.filter-ph { color: #999; font-size: 8px; }
.filter-go { margin-left: auto; width: 15px; height: 9px; background: #7a9fd4; display: flex; justify-content: center; align-items: center; }
.filter-box small { font-size: 6px; color: #555; padding-right: 3px; margin-left: 1px; }
.expr { color: #666; font-size: 7.6px; white-space: nowrap; margin-left: -2px; }
.plus { margin-left: auto; font-weight: 700; color: #444; padding-right: 3px; font-size: 9px; }

.pk { height: 99px; display: flex; border-bottom: 1px solid #9a9aa0; box-sizing: border-box; }
.pk-main { flex: 1; min-width: 0; }
.pk-grid { display: grid; grid-template-columns: 42px 65px 98px 98px 37px 28px 1fr; white-space: nowrap; }
.pk-head { height: 14px; color: #555; font-size: 8px; line-height: 14px; }
.pk-head span { padding-left: 2px; border-right: 1px solid #e8e8ec; box-sizing: border-box; overflow: hidden; }
.pk-head span:first-child { padding-left: 1px; }
.pk-head span:last-child { border-right: 0; }
.pk-rows { position: relative; font-family: "DejaVu Sans Mono", "Liberation Mono", monospace; font-size: 7.75px; color: #23301d; }
.pk-row { height: 11.333px; line-height: 11.333px; }
.pk-row span { padding-left: 2px; overflow: hidden; }
.pk-row span:last-child { padding-left: 3px; }
.pk-row .r { text-align: right; padding: 0 2px 0 0; }
.pk-row .r:first-child { padding-right: 3px; }
.pk-row.green { background: #e6f9cc; }
.pk-row.hover { background: #d5edd5; }
.pk-row.yellow { background: #fffbd6; }
.related { position: absolute; left: 5px; top: 0; width: 5px; height: 74px; border-left: 1px dashed #8a8a70; border-bottom: 1px solid #8a8a70; box-sizing: border-box; }
.vbar { width: 11px; position: relative; }
.vbar .up { position: absolute; left: 2px; top: 3px; }
.vbar .dn { position: absolute; left: 2px; bottom: 3px; }
.vthumb { position: absolute; left: 0; top: 75px; width: 11px; height: 12px; background: #c8c8d0; }

.split { height: 4px; border-bottom: 1px solid #9a9aa0; box-sizing: border-box; }
.det { height: 98px; box-sizing: border-box; padding-top: .7px; font-family: "DejaVu Sans Mono", "Liberation Mono", monospace; font-size: 7.75px; color: #333; border-bottom: 1px solid #9a9aa0; }
.det-row { height: 11.333px; line-height: 11.333px; background: #f4ecf8; position: relative; padding-left: 14px; white-space: nowrap; }
.caret { position: absolute; left: 4px; color: #888; }
.hex { flex: 1; display: flex; background: linear-gradient(90deg, #f4ecf8 28px, #fff 28px); font-family: "DejaVu Sans Mono", "Liberation Mono", monospace; font-size: 7.75px; line-height: 10.2px; padding-top: .7px; color: #333; white-space: pre; }
.hex-off { width: 32px; padding-left: 3px; box-sizing: border-box; color: #aaa; }
.hex-data { width: 239px; }
.ws-status { height: 15px; background: #f4ecf8; border-top: 1px solid #c4c4cc; box-sizing: border-box; display: flex; align-items: center; padding-left: 5px; color: #444; font-size: 7.6px; position: relative; }
.st-edit { margin-left: 6px; }
.st-count { position: absolute; left: 579px; }
.st-prof { position: absolute; left: 813px; }
.st-sep { position: absolute; top: 1px; width: 1px; height: 11px; background: #b8b8c0; }
.st-sep.one { left: 806px; }
.st-sep.two { left: 865px; }
.grip { position: absolute; right: 1px; bottom: 0; }

.cursor { position: absolute; left: 508px; top: 170px; }

/* Taskbar */
.taskbar { position: absolute; left: 0; right: 0; bottom: 0; height: 27px; background: rgba(8, 8, 10, .88); display: flex; align-items: center; color: #fff; }
.tb-fixed, .tb-app { width: 32.4px; height: 27px; display: flex; align-items: center; justify-content: center; box-sizing: border-box; flex: none; }
.tb-app.on { border-bottom: 2px solid #76b9ed; }
.tb-app.shark { background: rgba(255, 255, 255, .18); }
.tb-app.outlook svg { margin-left: 3px; }
.tray { margin-left: auto; display: flex; align-items: center; gap: 6px; padding-right: 4px; }
.tray-lang { font-size: 8.4px; margin-left: -4px; }
.clock { display: flex; flex-direction: column; align-items: center; font-size: 8.6px; line-height: 12px; padding-right: 4px; }
</style>
